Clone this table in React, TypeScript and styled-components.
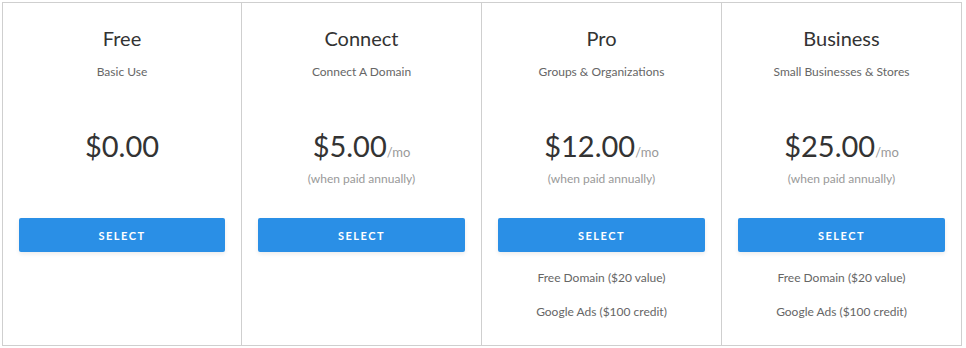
import styled, { createGlobalStyle } from "styled-components";

const GlobalStyle = createGlobalStyle`
  html, body {
    margin: 0;
    background: #fff;
  }
  body {
    padding: 2px;
    font-family: Lato, "Liberation Sans", sans-serif;
  }
`;

const Table = styled.section`
  display: grid;
  grid-template-columns: 239px 240px 240px 239px;
  width: max-content;
  border: 1px solid #cfcfcf;
`;

const Plan = styled.div`
  display: flex;
  flex-direction: column;
  align-items: center;
  height: 342px;
  padding: 23px 16px 0;
  box-sizing: border-box;
  text-align: center;
  &:not(:last-child) {
    border-right: 1px solid #cfcfcf;
  }
`;

const Name = styled.h2`
  margin: 0;
  font-size: 20px;
  line-height: 24px;
  font-weight: 400;
  color: #333;
`;

const Tagline = styled.p`
  margin: 14px 0 0;
  font-size: 12px;
  line-height: 16px;
  color: #666;
`;

const PriceBlock = styled.div`
  height: 89px;
  margin-top: 48px;
`;

const Price = styled.div`
  font-size: 29px;
  line-height: 36px;
  color: #333;
  span {
    font-size: 13px;
    color: #999;
  }
`;

const Note = styled.p`
  margin: 1px 0 0;
  font-size: 12px;
  line-height: 16px;
  color: #999;
`;

const SelectButton = styled.button`
  width: 100%;
  height: 34px;
  margin-top: 1px;
  border: none;
  border-radius: 2px;
  background: #2a8fe6;
  box-shadow: 0 2px 4px rgba(0, 0, 0, 0.08);
  color: #fff;
  font-family: inherit;
  font-size: 11px;
  font-weight: 700;
  letter-spacing: 1.5px;
  cursor: pointer;
`;

const Features = styled.ul`
  list-style: none;
  margin: 0;
  padding: 0;
  li {
    margin-top: 18px;
    font-size: 12px;
    line-height: 16px;
    color: #666;
  }
`;

type PlanData = {
  name: string;
  tagline: string;
  price: string;
  monthly: boolean;
  features: string[];
};

const plans: PlanData[] = [
  { name: "Free", tagline: "Basic Use", price: "$0.00", monthly: false, features: [] },
  { name: "Connect", tagline: "Connect A Domain", price: "$5.00", monthly: true, features: [] },
  {
    name: "Pro",
    tagline: "Groups & Organizations",
    price: "$12.00",
    monthly: true,
    features: ["Free Domain ($20 value)", "Google Ads ($100 credit)"],
  },
  {
    name: "Business",
    tagline: "Small Businesses & Stores",
    price: "$25.00",
    monthly: true,
    features: ["Free Domain ($20 value)", "Google Ads ($100 credit)"],
  },
];

export default function App() {
  return (
    <>
      <GlobalStyle />
      <Table>
        {plans.map((p) => (
          <Plan key={p.name}>
            <Name>{p.name}</Name>
            <Tagline>{p.tagline}</Tagline>
            <PriceBlock>
              <Price>
                {p.price}
                {p.monthly && <span>/mo</span>}
              </Price>
              {p.monthly && <Note>(when paid annually)</Note>}
            </PriceBlock>
            <SelectButton>SELECT</SelectButton>
            {p.features.length > 0 && (
              <Features>
                {p.features.map((f) => (
                  <li key={f}>{f}</li>
                ))}
              </Features>
            )}
          </Plan>
        ))}
      </Table>
    </>
  );
}
